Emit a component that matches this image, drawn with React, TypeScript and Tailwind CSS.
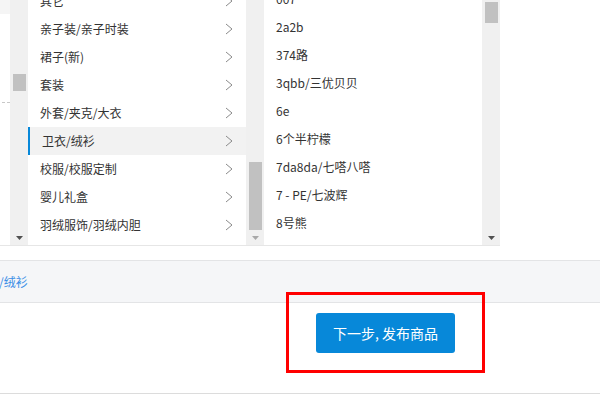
const categories = [
  '其它',
  '亲子装/亲子时装',
  '裙子(新)',
  '套装',
  '外套/夹克/大衣',
  '卫衣/绒衫',
  '校服/校服定制',
  '婴儿礼盒',
  '羽绒服饰/羽绒内胆',
];

const brands = ['007', '2a2b', '374路', '3qbb/三优贝贝', '6e', '6个半柠檬', '7da8da/七嗒八嗒', '7 - PE/七波辉', '8号熊'];

const font = { fontFamily: '"Noto Sans CJK SC", "Microsoft YaHei", "Liberation Sans", sans-serif' };

function Chevron() {
  return (
    <svg width="8" height="12" viewBox="0 0 8 12" fill="none">
      <polyline points="1,1 7,6 1,11" stroke="#8a8a8a" strokeWidth="1" />
    </svg>
  );
}

function DownArrow({ color }: { color: string }) {
  return (
    <svg width="7" height="4" viewBox="0 0 7 4">
      <polygon points="0,0 7,0 3.5,4" fill={color} />
    </svg>
  );
}

function Scrollbar({ thumbTop, thumbHeight, arrow }: { thumbTop: number; thumbHeight: number; arrow: string }) {
  return (
    <div className="w-[18px] h-full bg-[#f0f0f0] flex flex-col items-center shrink-0">
      <div className="w-[13px] bg-[#c1c1c1]" style={{ marginTop: thumbTop, height: thumbHeight }} />
      <div className="flex-1" />
      <div className="mb-[5px] flex">
        <DownArrow color={arrow} />
      </div>
    </div>
  );
}

export default function App() {
  return (
    <div className="relative w-[600px] h-[400px] overflow-hidden bg-white text-[12px] text-[#333]" style={font}>
      <div className="flex h-[246px]">
        <div className="flex w-[500px] h-full border-b border-[#e6e6e6]">
          <div className="w-[10px] h-full flex flex-col">
            <div className="h-[14px] bg-[#f5f5f5]" />
            <div className="mt-[88px] ml-[2px] w-[8px] border-t border-dashed border-[#c8c8c8]" />
          </div>
          <Scrollbar thumbTop={74} thumbHeight={17} arrow="#505050" />
          <div className="w-[218px] h-full overflow-hidden">
            <div className="mt-[-13px]">
              {categories.map((c) => {
                const active = c === '卫衣/绒衫';
                return (
                  <div
                    key={c}
                    className={`h-[28px] flex items-center justify-between pl-[12px] pr-[13px] ${active ? 'bg-[#f2f2f2] border-l-2 border-[#0788d9] pl-[10px]' : ''}`}
                  >
                    <span>{c}</span>
                    <Chevron />
                  </div>
                );
              })}
            </div>
          </div>
          <Scrollbar thumbTop={162} thumbHeight={68} arrow="#a8a8a8" />
          <div className="w-[218px] h-full overflow-hidden">
            <div className="mt-[-15px]">
              {brands.map((b) => (
                <div key={b} className="h-[28px] flex items-center pl-[12px]">
                  {b}
                </div>
              ))}
            </div>
          </div>
          <Scrollbar thumbTop={2} thumbHeight={21} arrow="#505050" />
        </div>
        <div className="flex-1" />
      </div>

      <div className="mt-[14px] h-[43px] bg-[#f5f6f8] border-y border-[#e3e4e6] flex items-center overflow-hidden">
        <span className="ml-[-25px] text-[#3a8ee6] whitespace-nowrap">卫衣/绒衫</span>
      </div>

      <div className="h-[91px] border-b border-[#dcdcdc] pl-[316px] pt-[10px]">
        <button className="w-[139px] h-[40px] rounded-[3px] bg-[#0788d9] text-white text-[14px]">
          下一步, 发布商品
        </button>
      </div>

      <div className="absolute left-[286px] top-[292px] w-[199px] h-[81px] border-[3px] border-[#ff0000]" />
    </div>
  );
}
